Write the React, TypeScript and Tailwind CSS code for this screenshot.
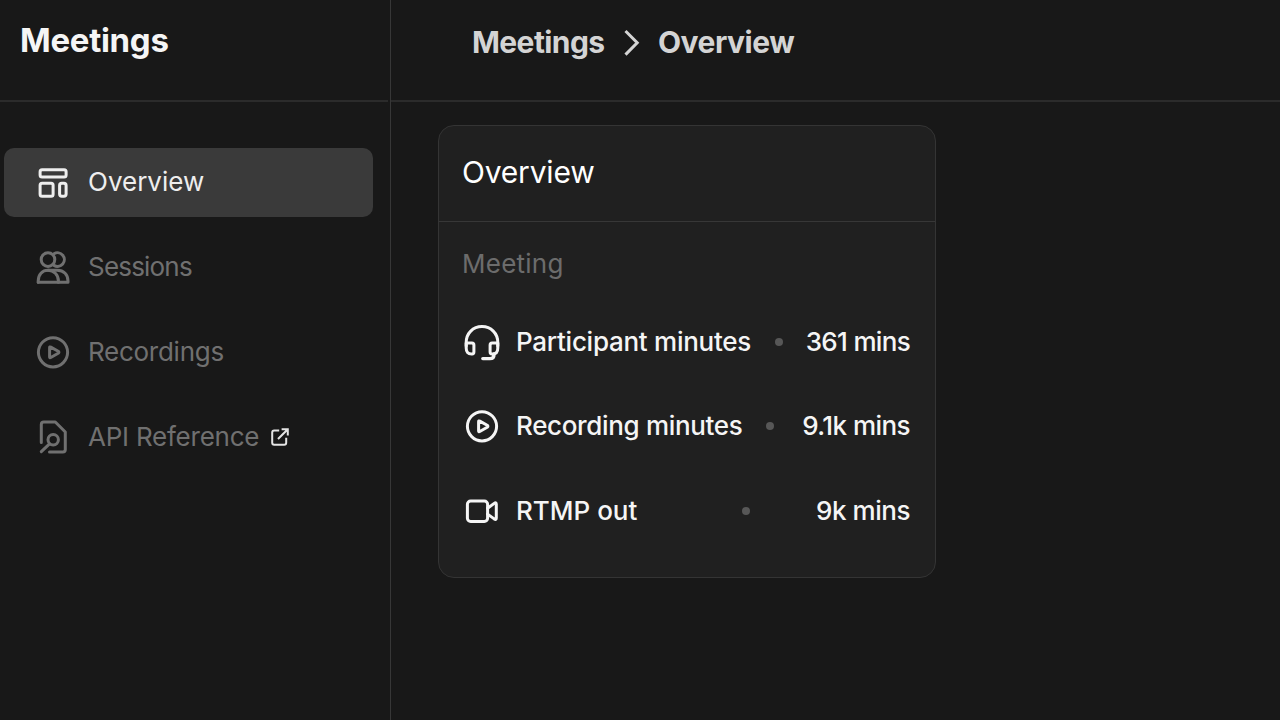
import type { ReactNode } from "react";
import clsx from "clsx";

const stroke = {
  fill: "none",
  stroke: "currentColor",
  strokeWidth: 3,
  strokeLinecap: "round" as const,
  strokeLinejoin: "round" as const,
};

function Icon({ children }: { children: ReactNode }) {
  return (
    <svg width="40" height="40" viewBox="0 0 40 40" className="block shrink-0" {...stroke}>
      {children}
    </svg>
  );
}

const BoardIcon = () => (
  <Icon>
    <rect x="7.1" y="6.7" width="26" height="7.4" rx="2" />
    <rect x="7.1" y="20.2" width="13" height="13" rx="2" />
    <rect x="26.6" y="20.2" width="6.5" height="13" rx="2.2" />
  </Icon>
);

const PeopleIcon = () => (
  <Icon>
    <circle cx="15" cy="11.6" r="6.8" />
    <path d="M21 5.8A6.8 6.8 0 1 1 21 17.4" />
    <path d="M5.2 34.3V33C5.2 26.6 9.3 22.3 15 22.3S25.4 26.6 25.4 33V34.3" />
    <path d="M15 22.3H24.3C30.8 22.3 35 26.6 35 33V34.3H5.2" />
  </Icon>
);

const PlayIcon = () => (
  <Icon>
    <circle cx="20" cy="20.3" r="14.6" />
    <path d="M16.6 15.7V24.9Q16.6 26.1 17.8 25.5L25.2 21.3Q26.6 20.3 25.2 19.3L17.8 15.1Q16.6 14.5 16.6 15.7Z" />
  </Icon>
);

const DocSearchIcon = () => (
  <Icon>
    <path d="M8.3 25.5V7.5Q8.3 5 10.8 5H22.3L32.3 15V32.5Q32.3 35 29.8 35H16.5" />
    <circle cx="20.2" cy="22.8" r="5.2" />
    <path d="M16.5 26.8L8.3 34.6" />
  </Icon>
);

const HeadsetIcon = () => (
  <Icon>
    <path d="M4.2 24V20.5C4.2 11.2 11 4.6 20 4.6S35.8 11.2 35.8 20.5V24" />
    <path d="M4.2 21H9.9Q11.9 21 11.9 23V30.1Q11.9 32 10.1 32H9.5Q4.2 32 4.2 26Z" />
    <path d="M35.8 21H30.1Q28.1 21 28.1 23V30.1Q28.1 32 29.9 32H30.5Q35.8 32 35.8 26Z" />
    <path d="M32 32V32.4Q32 36.6 28 36.6H20.8" strokeWidth="3.4" />
  </Icon>
);

const VideoIcon = () => (
  <Icon>
    <rect x="5.4" y="10" width="20.2" height="20.4" rx="3.2" />
    <path d="M25.6 17.2L32.2 12.4Q34.3 11 34.3 13.3V27Q34.3 29.3 32.2 27.9L25.6 23.1" />
  </Icon>
);

const ExternalIcon = () => (
  <svg
    width="20"
    height="20"
    viewBox="0 0 20 20"
    className="ml-[11px] block shrink-0 text-[#e4e4e4]"
    {...stroke}
    strokeWidth={2}
    strokeLinecap="butt"
    strokeLinejoin="miter"
  >
    <path d="M9.2 3.6H4.2Q2.2 3.6 2.2 5.6V15.8Q2.2 17.8 4.2 17.8H14.2Q16.2 17.8 16.2 15.8V10.8" />
    <path d="M11.6 2.2H17.8V8.4M17.8 2.2L8 12" />
  </svg>
);

type NavItem = {
  label: string;
  icon: ReactNode;
  tracking: string;
  active?: boolean;
  external?: boolean;
};

const nav: NavItem[] = [
  { label: "Overview", icon: <BoardIcon />, tracking: "tracking-[0px]", active: true },
  { label: "Sessions", icon: <PeopleIcon />, tracking: "tracking-[-0.8px]" },
  { label: "Recordings", icon: <PlayIcon />, tracking: "tracking-[-0.27px]" },
  { label: "API Reference", icon: <DocSearchIcon />, tracking: "tracking-[-0.23px]", external: true },
];

const rows = [
  { label: "Participant minutes", value: "361 mins", icon: <HeadsetIcon />, lt: "tracking-[-0.27px]", vt: "tracking-[-0.68px]", gap: "mr-[23px]" },
  { label: "Recording minutes", value: "9.1k mins", icon: <PlayIcon />, lt: "tracking-[-0.34px]", vt: "tracking-[-0.55px]", gap: "mr-[28px]" },
  { label: "RTMP out", value: "9k mins", icon: <VideoIcon />, lt: "tracking-[0px]", vt: "tracking-[-0.45px]", gap: "mr-[66.5px]" },
];

export default function App() {
  return (
    <div className="flex h-[720px] w-[1280px] overflow-hidden bg-[#181818] font-['Inter','Liberation_Sans',sans-serif] whitespace-nowrap">
      <aside className="flex w-[391px] shrink-0 flex-col border-r border-[#373737]">
        <div className="mr-[2px] flex h-[102px] shrink-0 border-b-2 border-[#2b2b2b] pt-[20px] pl-[20px]">
          <h1 className="text-[33px] leading-[40px] font-bold tracking-[-0.3px] text-[#f5f5f5]">Meetings</h1>
        </div>
        <nav className="flex flex-col gap-[15.8px] pt-[46.4px] pr-[17px] pl-[3.5px]">
          {nav.map((n) => (
            <div
              key={n.label}
              className={clsx(
                "flex h-[69px] items-center rounded-[10px] pl-[29.5px]",
                n.active ? "bg-[#3a3a3a] text-[#eeeeee]" : "text-[#707070]",
              )}
            >
              {n.icon}
              <span className={clsx("-mt-px ml-[15px] text-[26px] leading-[32px]", n.tracking)}>{n.label}</span>
              {n.external && <ExternalIcon />}
            </div>
          ))}
        </nav>
      </aside>
      <main className="flex flex-1 flex-col">
        <header className="flex h-[102px] shrink-0 border-b-2 border-[#2b2b2b] pt-[22px] pl-[81px] text-[30px] leading-[40px] font-bold text-[#d4d4d4]">
          <span className="w-[133px] tracking-[-0.6px]">Meetings</span>
          <svg width="16" height="28" viewBox="0 0 16 28" className="mr-[18px] ml-[19px] mt-[7px] block" {...stroke} strokeLinecap="butt" strokeLinejoin="miter">
            <path d="M1.5 2L13.2 13.8L1.5 25.6" />
          </svg>
          <span className="tracking-[-0.5px]">Overview</span>
        </header>
        <section className="mt-[23px] ml-[47px] h-[453px] w-[498px] rounded-[16px] border border-[#343434] bg-[#202020]">
          <h2 className="h-[96px] border-b border-[#373737] pt-[26px] pl-[23px] text-[30px] leading-[40px] tracking-[-0.2px] text-white">
            Overview
          </h2>
          <div className="pt-[26px] pr-[25px] pl-[23px]">
            <p className="text-[26px] leading-[32px] tracking-[0.25px] text-[#6c6c6c]">Meeting</p>
            <div className="mt-[27px] flex flex-col gap-[15.8px]">
              {rows.map((r) => (
                <div key={r.label} className="flex h-[69px] items-center text-[26px] leading-[32px] font-[450] text-[#f5f5f5]">
                  <div className="-ml-[0.5px]">{r.icon}</div>
                  <span className={clsx("ml-[14.5px]", r.lt)}>{r.label}</span>
                  <i className={clsx("ml-auto size-[8px] rounded-full bg-[#575757]", r.gap)} />
                  <span className={r.vt}>{r.value}</span>
                </div>
              ))}
            </div>
          </div>
        </section>
      </main>
    </div>
  );
}
